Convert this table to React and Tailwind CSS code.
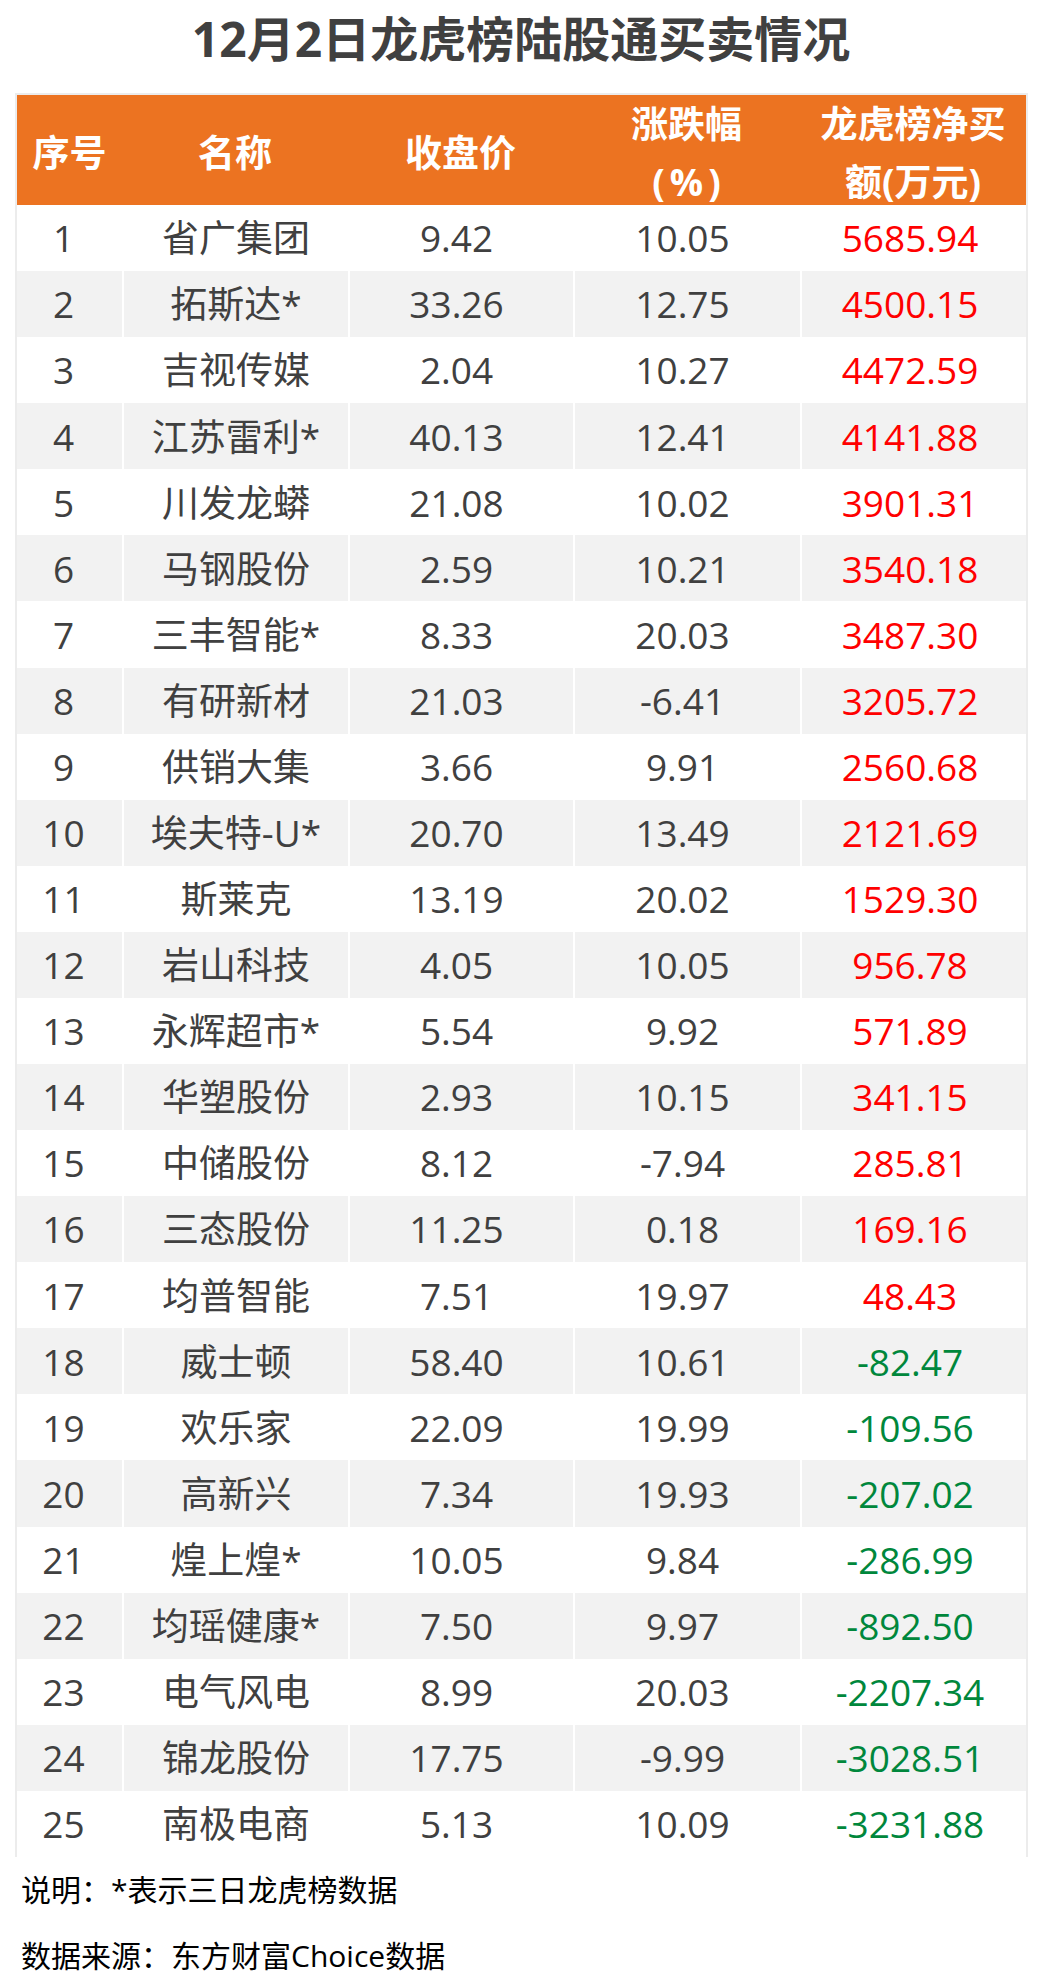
import React from 'react'

const rows = [
  ['1', '省广集团', '9.42', '10.05', '5685.94'],
  ['2', '拓斯达*', '33.26', '12.75', '4500.15'],
  ['3', '吉视传媒', '2.04', '10.27', '4472.59'],
  ['4', '江苏雷利*', '40.13', '12.41', '4141.88'],
  ['5', '川发龙蟒', '21.08', '10.02', '3901.31'],
  ['6', '马钢股份', '2.59', '10.21', '3540.18'],
  ['7', '三丰智能*', '8.33', '20.03', '3487.30'],
  ['8', '有研新材', '21.03', '-6.41', '3205.72'],
  ['9', '供销大集', '3.66', '9.91', '2560.68'],
  ['10', '埃夫特-U*', '20.70', '13.49', '2121.69'],
  ['11', '斯莱克', '13.19', '20.02', '1529.30'],
  ['12', '岩山科技', '4.05', '10.05', '956.78'],
  ['13', '永辉超市*', '5.54', '9.92', '571.89'],
  ['14', '华塑股份', '2.93', '10.15', '341.15'],
  ['15', '中储股份', '8.12', '-7.94', '285.81'],
  ['16', '三态股份', '11.25', '0.18', '169.16'],
  ['17', '均普智能', '7.51', '19.97', '48.43'],
  ['18', '威士顿', '58.40', '10.61', '-82.47'],
  ['19', '欢乐家', '22.09', '19.99', '-109.56'],
  ['20', '高新兴', '7.34', '19.93', '-207.02'],
  ['21', '煌上煌*', '10.05', '9.84', '-286.99'],
  ['22', '均瑶健康*', '7.50', '9.97', '-892.50'],
  ['23', '电气风电', '8.99', '20.03', '-2207.34'],
  ['24', '锦龙股份', '17.75', '-9.99', '-3028.51'],
  ['25', '南极电商', '5.13', '10.09', '-3231.88'],
]

const font = { fontFamily: '"Open Sans", "Noto Sans CJK SC", sans-serif' }

function Row({ row, index }) {
  const bg = index % 2 === 1 ? 'bg-[#f2f2f2]' : 'bg-white'
  const net = row[4]
  const netColor = net.startsWith('-') ? 'text-[#00873c]' : 'text-[#ff0000]'
  return (
    <div className={`grid grid-cols-[105px_226px_225px_227px_226px] h-[66.08px] ${bg}`}>
      <div className="flex items-center justify-center pr-[12px]">{row[0]}</div>
      <div className="flex items-center justify-center border-l-2 border-white">{row[1]}</div>
      <div className="flex items-center justify-center border-l-2 border-white pr-[10px]">{row[2]}</div>
      <div className="flex items-center justify-center border-l-2 border-white pr-[10px]">{row[3]}</div>
      <div className={`flex items-center justify-center border-l-2 border-white pr-[8px] ${netColor}`}>{net}</div>
    </div>
  )
}

export default function App() {
  return (
    <div className="w-[1042px] h-[1984px] bg-white overflow-hidden" style={font}>
      <div className="h-[93px] pt-[10px]">
        <h1 className="text-center text-[48px] leading-[58px] font-bold text-[#404040]">
          12月2日龙虎榜陆股通买卖情况
        </h1>
      </div>

      <div className="ml-[15px] mr-[14px] border-t-2 border-x-2 border-[#ececec]">
        <div className="grid grid-cols-[105px_226px_225px_227px_226px] h-[110px] bg-[#ec7321] text-white font-bold text-[37px] leading-[58px]">
          <div className="flex items-center justify-center">序号</div>
          <div className="flex items-center justify-center">名称</div>
          <div className="flex items-center justify-center">收盘价</div>
          <div className="flex flex-col items-center justify-center">
            <span>涨跌幅</span>
            <span className="tracking-[5px] pl-[5px]">(%)</span>
          </div>
          <div className="flex flex-col items-center justify-center">
            <span>龙虎榜净买</span>
            <span>额(万元)</span>
          </div>
        </div>

        <div className="text-[37px] text-[#404040]">
          {rows.map((row, i) => (
            <Row key={row[0]} row={row} index={i} />
          ))}
        </div>
      </div>

      <div className="pl-[21px] text-[30px] leading-[66px] text-black">
        <p>说明：*表示三日龙虎榜数据</p>
        <p>数据来源：东方财富Choice数据</p>
      </div>
    </div>
  )
}
